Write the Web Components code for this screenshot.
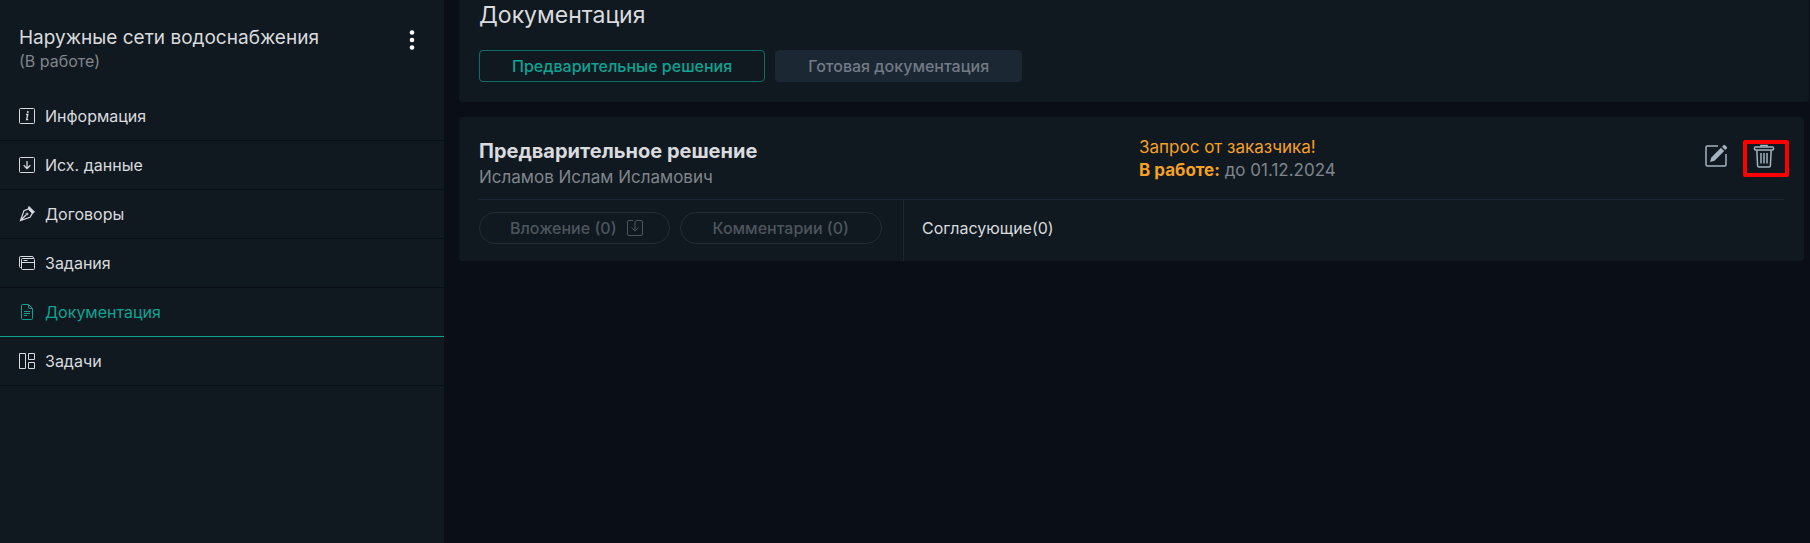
<!DOCTYPE html>
<html lang="ru">
<head>
<meta charset="utf-8">
<title>Документация</title>
<style>
html { background: #0a0e16; }
body { margin: 0; font-family: Inter, "Noto Sans", sans-serif; color: #d9dbdf; }
</style>
</head>
<body>
<app-shell>
  <side-panel slot="side" heading="Наружные сети водоснабжения" status="(В работе)">
    <nav-item icon="info">Информация</nav-item>
    <nav-item icon="download">Исх. данные</nav-item>
    <nav-item icon="pen">Договоры</nav-item>
    <nav-item icon="folders">Задания</nav-item>
    <nav-item icon="doc" active>Документация</nav-item>
    <nav-item icon="board">Задачи</nav-item>
  </side-panel>
  <page-header heading="Документация">
    <tab-button active>Предварительные решения</tab-button>
    <tab-button>Готовая документация</tab-button>
  </page-header>
  <decision-card>
    <span slot="title">Предварительное решение</span>
    <span slot="author">Исламов Ислам Исламович</span>
    <span slot="request">Запрос от заказчика!</span>
    <span slot="state">В работе:</span>
    <span slot="due">до 01.12.2024</span>
    <pill-button slot="actions" icon="attach">Вложение (0)</pill-button>
    <pill-button slot="actions">Комментарии (0)</pill-button>
    <span slot="approvers">Согласующие(0)</span>
  </decision-card>
</app-shell>
<script>
const ICONS = {
  info: '<svg width="18" height="18" viewBox="0 0 18 18" fill="none" stroke="currentColor"><rect x="1.5" y="1.5" width="15" height="15" rx="1"/><path d="M8 7.5h1.8l-1.2 5.2h1.6" stroke-width="1.3"/><circle cx="9.8" cy="5" r=".6" fill="currentColor"/></svg>',
  download: '<svg width="18" height="18" viewBox="0 0 18 18" fill="none" stroke="currentColor"><rect x="1.5" y="1.5" width="15" height="15" rx="1"/><path d="M9 5v7.5M5.7 9.3 9 12.6l3.3-3.3" stroke-width="1.3"/></svg>',
  pen: '<svg width="18" height="18" viewBox="0 0 18 18" fill="none" stroke="currentColor"><path d="M11 1.5 16.5 7l-2 1.6-4.3-4.6z" fill="currentColor"/><path d="M10.2 4 6 5.6 2.5 15.5l9.5-3.3L14.3 8.4M3 15l5-5" stroke-width="1.2"/><circle cx="9" cy="9" r="1"/></svg>',
  folders: '<svg width="18" height="18" viewBox="0 0 18 18" fill="none" stroke="currentColor"><rect x="3.5" y="4.5" width="13" height="11" rx="1"/><path d="M3.5 13.5h-1a1 1 0 0 1-1-1V3.500a1 1 0 0 1 1-1h11.500a1.500 1.500 0 0 1 1.500 1.500v.5M3.500 8.500h13M5.500 6.500h4"/></svg>',
  doc: '<svg width="18" height="18" viewBox="0 0 18 18" fill="none" stroke="currentColor"><path d="M4.500 1.500h6l4 4v10a1 1 0 0 1-1 1h-9a1 1 0 0 1-1-1v-13a1 1 0 0 1 1-1zM10.500 1.500v3a1 1 0 0 0 1 1h3M6 8.500h6M6 10.500h6M6 12.500h3"/></svg>',
  board: '<svg width="18" height="18" viewBox="0 0 18 18" fill="none" stroke="currentColor"><path d="M1.500 1.500h6v15h-6zM10.500 1.500h6v6h-6zM10.500 10.500h6v6h-6z"/></svg>',
  attach: '<svg width="16" height="18" viewBox="0 0 16 18" fill="none" stroke="currentColor"><path d="M6 1.500H2a1.500 1.500 0 0 0-1.500 1.500v12A1.500 1.500 0 0 0 2 16.500h12a1.500 1.500 0 0 0 1.500-1.500V3A1.500 1.500 0 0 0 14 1.500H9.500a1.500 1.500 0 0 0-1.500 1.500v8.500M4.500 8.500 8 12l3.500-3.500"/></svg>'
};
const define = (name, template) => customElements.define(name, class extends HTMLElement {
  connectedCallback() {
    if (this.shadowRoot) return;
    this.attachShadow({ mode: 'open' }).innerHTML = template(this);
  }
});

define('app-shell', () => `
<style>
:host { display: grid; grid-template-columns: 444px 1fr; column-gap: 15px; min-height: 100vh; }
main { display: flex; flex-direction: column; gap: 15px; min-width: 0; }
</style>
<slot name="side"></slot><main><slot></slot></main>`);

define('side-panel', el => `
<style>
:host { display: block; background: #111920; }
header { display: flex; justify-content: space-between; padding: 26px 24px 20px 19px; }
h2 { margin: 0; font-size: 19px; font-weight: 400; line-height: 24px; }
p { margin: 0; font-size: 16px; line-height: 22px; color: #7f858b; }
button { align-self: flex-start; display: flex; margin: 0; padding: 3px 0; border: 0; background: none; color: #fff; }
</style>
<header><div><h2>${el.getAttribute('heading')}</h2><p>${el.getAttribute('status')}</p></div>
<button type="button" aria-label="Меню"><svg width="16" height="22" viewBox="0 0 16 22" fill="currentColor"><circle cx="8" cy="3.500" r="2.300"/><circle cx="8" cy="11" r="2.300"/><circle cx="8" cy="18.500" r="2.300"/></svg></button></header>
<nav><slot></slot></nav>`);

define('nav-item', el => `
<style>
:host { display: block; border-bottom: 1px solid #0a0e16; }
:host([active]) { border-color: #0fa293; color: #0fa293; }
a { display: flex; align-items: center; gap: 9px; height: 48px; padding-left: 18px; font-size: 16px; line-height: 20px; color: inherit; text-decoration: none; }
svg { display: block; }
</style>
<a href="#">${ICONS[el.getAttribute('icon')]}<slot></slot></a>`);

define('page-header', el => `
<style>
:host { display: block; margin-right: 1px; padding: 0 20px 20px; background: #111920; border-radius: 0 0 4px 4px; }
h1 { margin: 0 0 20px; font-size: 23px; font-weight: 400; line-height: 30px; }
div { display: flex; gap: 10px; }
</style>
<h1>${el.getAttribute('heading')}</h1><div><slot></slot></div>`);

define('tab-button', () => `
<style>
:host { display: block; }
button { height: 32px; padding: 0 32px; border: 1px solid #1b2733; border-radius: 4px; background: #1b2733; color: #737a84; font: 500 16px/20px Inter, sans-serif; }
:host([active]) button { border-color: #0b6e68; background: none; color: #0fa293; }
</style>
<button type="button"><slot></slot></button>`);

define('pill-button', el => `
<style>
:host { display: block; }
button { display: flex; align-items: center; gap: 10px; height: 32px; padding: 0 32px; border: 1px solid #232c34; border-radius: 16px; background: none; color: #4d555c; font: 500 16px/20px Inter, sans-serif; }
:host([icon]) button { padding: 0 26px 0 30px; }
</style>
<button type="button" disabled><slot></slot>${ICONS[el.getAttribute('icon')] || ''}</button>`);

define('decision-card', () => `
<style>
:host { display: block; margin-right: 6px; padding: 0 20px; background: #111920; border-radius: 4px; }
.top { display: grid; grid-template-columns: 660px 1fr auto; height: 82px; border-bottom: 1px solid #1b2733; font-size: 17px; }
h3, p { margin: 0; }
.name { padding-top: 21px; }
h3 { font-size: 20px; font-weight: 700; line-height: 26px; }
.muted { color: #7f858b; }
.name p { line-height: 26px; }
.status { padding-top: 19px; line-height: 23px; color: #f5a123; }
.tools { display: flex; align-items: flex-start; gap: 15px; padding-top: 23px; }
button { display: flex; padding: 0; border: 0; background: none; color: #a3b3c0; }
.edit { padding-top: 4px; }
.remove { box-sizing: border-box; width: 46px; height: 37px; padding-left: 5px; border: 4px solid #f00; margin-right: -5px; border-radius: 2px; }
.bottom { display: flex; height: 61px; }
.actions { box-sizing: border-box; display: flex; gap: 10px; width: 425px; padding-top: 12px; border-right: 1px solid #1b2733; }
.approvers { padding: 18px; font-size: 16px; line-height: 20px; }
</style>
<div class="top">
<div class="name"><h3><slot name="title"></slot></h3><p class="muted"><slot name="author"></slot></p></div>
<div class="status"><p><slot name="request"></slot></p><p><b><slot name="state"></slot></b> <span class="muted"><slot name="due"></slot></span></p></div>
<div class="tools">
<button class="edit" type="button" aria-label="Изменить"><svg width="24" height="24" viewBox="0 0 24 24" fill="none" stroke="currentColor" stroke-width="1.500"><path d="M14 2H3.500A1.500 1.500 0 0 0 2 3.500v17A1.500 1.500 0 0 0 3.500 22h17a1.500 1.500 0 0 0 1.500-1.500V10"/><path d="m6 18 1.300-4.500L17 3.800l3.200 3.200-9.700 9.700z" fill="currentColor" stroke="none"/><path d="m18 2.800 1.600-1.600a1 1 0 0 1 1.400 0l1.800 1.800a1 1 0 0 1 0 1.400L21.200 6z" fill="currentColor" stroke="none"/></svg></button>
<button class="remove" type="button" aria-label="Удалить"><svg width="24" height="24" viewBox="0 0 24 24" fill="none" stroke="currentColor" stroke-width="1.500"><rect x="2.500" y="3" width="19" height="3" rx="1"/><path d="M9 3V1.500h6V3M4.800 6l.8 15.500a1.500 1.500 0 0 0 1.500 1.500h9.800a1.500 1.500 0 0 0 1.500-1.500L19.200 6M9 9v10.500M12 9v10.500M15 9v10.500"/></svg></button>
</div></div>
<div class="bottom"><div class="actions"><slot name="actions"></slot></div><div class="approvers"><slot name="approvers"></slot></div></div>`);
</script>
</body>
</html>
